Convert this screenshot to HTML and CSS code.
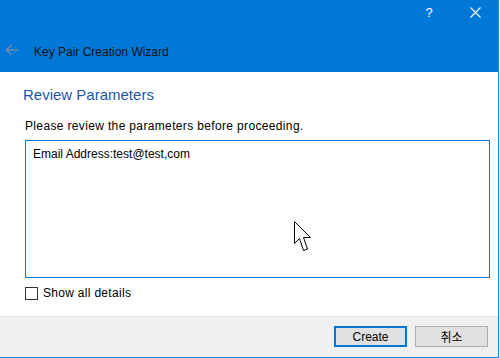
FILE: index.html
```html
<!DOCTYPE html>
<html lang="ko">
<head>
    <meta charset="UTF-8">
    <title>Key Pair Creation Wizard</title>
    <link rel="stylesheet" href="styles.css">
</head>
<body>
    <div class="wizard">
        <div class="titlebar">
            <div class="caption-row">
                <div class="caption-btn help">?</div>
                <div class="caption-btn close">
                    <svg width="11" height="11" viewBox="0 0 11 11">
                        <path d="M0.5 0.5 L10.5 10.5 M10.5 0.5 L0.5 10.5" stroke="#fff" stroke-width="1.1" fill="none"/>
                    </svg>
                </div>
            </div>
            <div class="title-row">
                <div class="back-arrow">
                    <svg width="14" height="12" viewBox="0 0 14 12">
                        <path d="M13 6 H1.5 M6.5 1 L1.5 6 L6.5 11" stroke="#6f8db0" stroke-width="1.4" fill="none"/>
                    </svg>
                </div>
                <div class="title">Key Pair Creation Wizard</div>
            </div>
        </div>

        <div class="content">
            <h1 class="page-heading">Review Parameters</h1>
            <p class="intro">Please review the parameters before proceeding.</p>
            <div class="summary-box">Email Address:test@test,com</div>
            <label class="check-row">
                <span class="checkbox"></span>
                <span class="check-label">Show all details</span>
            </label>
        </div>

        <div class="footer">
            <div class="btn btn-default">Create</div>
            <div class="btn">취소</div>
        </div>

        <!-- mouse pointer captured in the screenshot -->
        <svg class="pointer" width="19" height="32" viewBox="0 0 19 32">
            <path d="M1.5 1.5 V23.5 L6.5 18.5 L10.5 30.5 L14.5 29 L10.5 17.5 L17.5 17.5 Z" fill="#fff" stroke="#000" stroke-width="1"/>
        </svg>
    </div>
</body>
</html>
```

FILE: styles.css
```css
/* --- General --- */
* {
    margin: 0;
    padding: 0;
    box-sizing: border-box;
}

body {
    background: #fff;
    font-family: 'Liberation Sans', 'Noto Sans CJK KR', sans-serif;
    font-size: 12px;
    color: #000;
}

/* --- Window --- */
.wizard {
    position: relative;
    width: 499px;
    height: 358px;
    border-right: 1px solid #1883d7;
    border-bottom: 1px solid #1883d7;
    display: flex;
    flex-direction: column;
    overflow: hidden;
}

/* --- Title Bar --- */
.titlebar {
    height: 72px;
    background: #0078d7;
    display: flex;
    flex-direction: column;
}

.caption-row {
    height: 24px;
    display: flex;
    justify-content: flex-end;
}

.caption-btn {
    width: 46px;
    display: flex;
    justify-content: center;
    align-items: center;
    color: #fff;
}

.caption-btn.help {
    font-size: 13px;
}

.title-row {
    flex: 1;
    display: flex;
    align-items: center;
    padding-top: 7px;
}

.back-arrow {
    width: 34px;
    padding-left: 5px;
    display: flex;
    align-items: center;
    margin-top: -3px;
}

.title {
    font-size: 12px;
    color: #111;
}

/* --- Content --- */
.content {
    flex: 1;
    padding: 13px 9px 0 25px;
}

.page-heading {
    font-size: 15px;
    font-weight: normal;
    line-height: 20px;
    color: #1f56aa;
    margin-left: -2px;
}

.intro {
    line-height: 16px;
    margin-top: 13px;
    letter-spacing: 0.35px;
}

.summary-box {
    margin-top: 6px;
    width: 465px;
    height: 138px;
    border: 1px solid #0078d7;
    padding: 5px 7px;
    line-height: 16px;
}

.check-row {
    margin-top: 7px;
    height: 16px;
    display: flex;
    align-items: center;
    gap: 5px;
}

.check-label {
    letter-spacing: 0.3px;
}

.checkbox {
    width: 13px;
    height: 13px;
    border: 1px solid #333;
    background: #fff;
}

/* --- Footer --- */
.footer {
    height: 41px;
    border-top: 1px solid #dfdfdf;
    background: #f0f0f0;
    display: flex;
    justify-content: flex-end;
    align-items: flex-start;
    gap: 8px;
    padding: 9px 10px 0 0;
}

.btn {
    width: 73px;
    height: 21px;
    background: #e1e1e1;
    border: 1px solid #adadad;
    display: flex;
    justify-content: center;
    align-items: center;
}

.btn-default {
    border: 2px solid #0078d7;
}

/* --- Pointer overlay --- */
.pointer {
    position: absolute;
    left: 293px;
    top: 220px;
}
```
